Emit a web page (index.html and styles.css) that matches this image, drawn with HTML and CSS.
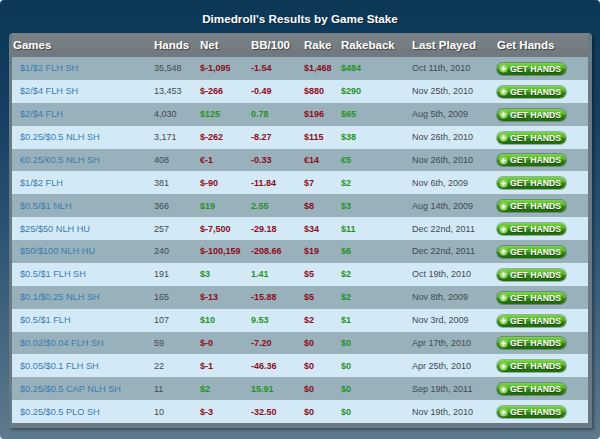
FILE: index.html
```html
<!DOCTYPE html>
<html>
<head>
<meta charset="utf-8">
<link rel="stylesheet" href="styles.css">
</head>
<body>
<div class="panel">
  <h1 class="title">Dimedroll's Results by Game Stake</h1>
  <div class="box">
    <table class="stats">
      <colgroup>
        <col class="c-game"><col class="c-hands"><col class="c-net"><col class="c-bb"><col class="c-rake"><col class="c-rb"><col class="c-last"><col class="c-get">
      </colgroup>
      <thead>
        <tr><th class="game">Games</th><th>Hands</th><th>Net</th><th>BB/100</th><th>Rake</th><th>Rakeback</th><th>Last Played</th><th>Get Hands</th></tr>
      </thead>
      <tbody>
        <tr><td class="game"><a>$1/$2 FLH SH</a></td><td class="num">35,548</td><td class="neg">$-1,095</td><td class="neg">-1.54</td><td class="neg">$1,468</td><td class="pos">$484</td><td class="date">Oct 11th, 2010</td><td><a class="get"><svg viewBox="0 0 10 10"><circle cx="5" cy="5" r="4.5" fill="#8fd25e"/><path d="M5 2.6v4.8M2.6 5h4.8" stroke="#fff" stroke-width="1.6"/></svg>GET HANDS</a></td></tr>
        <tr><td class="game"><a>$2/$4 FLH SH</a></td><td class="num">13,453</td><td class="neg">$-266</td><td class="neg">-0.49</td><td class="neg">$880</td><td class="pos">$290</td><td class="date">Nov 25th, 2010</td><td><a class="get"><svg viewBox="0 0 10 10"><circle cx="5" cy="5" r="4.5" fill="#8fd25e"/><path d="M5 2.6v4.8M2.6 5h4.8" stroke="#fff" stroke-width="1.6"/></svg>GET HANDS</a></td></tr>
        <tr><td class="game"><a>$2/$4 FLH</a></td><td class="num">4,030</td><td class="pos">$125</td><td class="pos">0.78</td><td class="neg">$196</td><td class="pos">$65</td><td class="date">Aug 5th, 2009</td><td><a class="get"><svg viewBox="0 0 10 10"><circle cx="5" cy="5" r="4.5" fill="#8fd25e"/><path d="M5 2.6v4.8M2.6 5h4.8" stroke="#fff" stroke-width="1.6"/></svg>GET HANDS</a></td></tr>
        <tr><td class="game"><a>$0.25/$0.5 NLH SH</a></td><td class="num">3,171</td><td class="neg">$-262</td><td class="neg">-8.27</td><td class="neg">$115</td><td class="pos">$38</td><td class="date">Nov 26th, 2010</td><td><a class="get"><svg viewBox="0 0 10 10"><circle cx="5" cy="5" r="4.5" fill="#8fd25e"/><path d="M5 2.6v4.8M2.6 5h4.8" stroke="#fff" stroke-width="1.6"/></svg>GET HANDS</a></td></tr>
        <tr><td class="game"><a>€0.25/€0.5 NLH SH</a></td><td class="num">408</td><td class="neg">€-1</td><td class="neg">-0.33</td><td class="neg">€14</td><td class="pos">€5</td><td class="date">Nov 26th, 2010</td><td><a class="get"><svg viewBox="0 0 10 10"><circle cx="5" cy="5" r="4.5" fill="#8fd25e"/><path d="M5 2.6v4.8M2.6 5h4.8" stroke="#fff" stroke-width="1.6"/></svg>GET HANDS</a></td></tr>
        <tr><td class="game"><a>$1/$2 FLH</a></td><td class="num">381</td><td class="neg">$-90</td><td class="neg">-11.84</td><td class="neg">$7</td><td class="pos">$2</td><td class="date">Nov 6th, 2009</td><td><a class="get"><svg viewBox="0 0 10 10"><circle cx="5" cy="5" r="4.5" fill="#8fd25e"/><path d="M5 2.6v4.8M2.6 5h4.8" stroke="#fff" stroke-width="1.6"/></svg>GET HANDS</a></td></tr>
        <tr><td class="game"><a>$0.5/$1 NLH</a></td><td class="num">366</td><td class="pos">$19</td><td class="pos">2.55</td><td class="neg">$8</td><td class="pos">$3</td><td class="date">Aug 14th, 2009</td><td><a class="get"><svg viewBox="0 0 10 10"><circle cx="5" cy="5" r="4.5" fill="#8fd25e"/><path d="M5 2.6v4.8M2.6 5h4.8" stroke="#fff" stroke-width="1.6"/></svg>GET HANDS</a></td></tr>
        <tr><td class="game"><a>$25/$50 NLH HU</a></td><td class="num">257</td><td class="neg">$-7,500</td><td class="neg">-29.18</td><td class="neg">$34</td><td class="pos">$11</td><td class="date">Dec 22nd, 2011</td><td><a class="get"><svg viewBox="0 0 10 10"><circle cx="5" cy="5" r="4.5" fill="#8fd25e"/><path d="M5 2.6v4.8M2.6 5h4.8" stroke="#fff" stroke-width="1.6"/></svg>GET HANDS</a></td></tr>
        <tr><td class="game"><a>$50/$100 NLH HU</a></td><td class="num">240</td><td class="neg">$-100,159</td><td class="neg">-208.66</td><td class="neg">$19</td><td class="pos">$6</td><td class="date">Dec 22nd, 2011</td><td><a class="get"><svg viewBox="0 0 10 10"><circle cx="5" cy="5" r="4.5" fill="#8fd25e"/><path d="M5 2.6v4.8M2.6 5h4.8" stroke="#fff" stroke-width="1.6"/></svg>GET HANDS</a></td></tr>
        <tr><td class="game"><a>$0.5/$1 FLH SH</a></td><td class="num">191</td><td class="pos">$3</td><td class="pos">1.41</td><td class="neg">$5</td><td class="pos">$2</td><td class="date">Oct 19th, 2010</td><td><a class="get"><svg viewBox="0 0 10 10"><circle cx="5" cy="5" r="4.5" fill="#8fd25e"/><path d="M5 2.6v4.8M2.6 5h4.8" stroke="#fff" stroke-width="1.6"/></svg>GET HANDS</a></td></tr>
        <tr><td class="game"><a>$0.1/$0.25 NLH SH</a></td><td class="num">165</td><td class="neg">$-13</td><td class="neg">-15.88</td><td class="neg">$5</td><td class="pos">$2</td><td class="date">Nov 8th, 2009</td><td><a class="get"><svg viewBox="0 0 10 10"><circle cx="5" cy="5" r="4.5" fill="#8fd25e"/><path d="M5 2.6v4.8M2.6 5h4.8" stroke="#fff" stroke-width="1.6"/></svg>GET HANDS</a></td></tr>
        <tr><td class="game"><a>$0.5/$1 FLH</a></td><td class="num">107</td><td class="pos">$10</td><td class="pos">9.53</td><td class="neg">$2</td><td class="pos">$1</td><td class="date">Nov 3rd, 2009</td><td><a class="get"><svg viewBox="0 0 10 10"><circle cx="5" cy="5" r="4.5" fill="#8fd25e"/><path d="M5 2.6v4.8M2.6 5h4.8" stroke="#fff" stroke-width="1.6"/></svg>GET HANDS</a></td></tr>
        <tr><td class="game"><a>$0.02/$0.04 FLH SH</a></td><td class="num">59</td><td class="neg">$-0</td><td class="neg">-7.20</td><td class="neg">$0</td><td class="pos">$0</td><td class="date">Apr 17th, 2010</td><td><a class="get"><svg viewBox="0 0 10 10"><circle cx="5" cy="5" r="4.5" fill="#8fd25e"/><path d="M5 2.6v4.8M2.6 5h4.8" stroke="#fff" stroke-width="1.6"/></svg>GET HANDS</a></td></tr>
        <tr><td class="game"><a>$0.05/$0.1 FLH SH</a></td><td class="num">22</td><td class="neg">$-1</td><td class="neg">-46.36</td><td class="neg">$0</td><td class="pos">$0</td><td class="date">Apr 25th, 2010</td><td><a class="get"><svg viewBox="0 0 10 10"><circle cx="5" cy="5" r="4.5" fill="#8fd25e"/><path d="M5 2.6v4.8M2.6 5h4.8" stroke="#fff" stroke-width="1.6"/></svg>GET HANDS</a></td></tr>
        <tr><td class="game"><a>$0.25/$0.5 CAP NLH SH</a></td><td class="num">11</td><td class="pos">$2</td><td class="pos">15.91</td><td class="neg">$0</td><td class="pos">$0</td><td class="date">Sep 19th, 2011</td><td><a class="get"><svg viewBox="0 0 10 10"><circle cx="5" cy="5" r="4.5" fill="#8fd25e"/><path d="M5 2.6v4.8M2.6 5h4.8" stroke="#fff" stroke-width="1.6"/></svg>GET HANDS</a></td></tr>
        <tr><td class="game"><a>$0.25/$0.5 PLO SH</a></td><td class="num">10</td><td class="neg">$-3</td><td class="neg">-32.50</td><td class="neg">$0</td><td class="pos">$0</td><td class="date">Nov 19th, 2010</td><td><a class="get"><svg viewBox="0 0 10 10"><circle cx="5" cy="5" r="4.5" fill="#8fd25e"/><path d="M5 2.6v4.8M2.6 5h4.8" stroke="#fff" stroke-width="1.6"/></svg>GET HANDS</a></td></tr>
      </tbody>
    </table>
  </div>
</div>
</body>
</html>
```

FILE: styles.css
```css
html, body {
  margin: 0;
  padding: 0;
  background: #ffffff;
}

.panel {
  width: 600px;
  height: 439px;
  box-sizing: border-box;
  border-radius: 4px;
  background: linear-gradient(to bottom, #0c3858 0%, #143f61 25%, #2d5574 55%, #5e7a8d 100%);
  font-family: "Liberation Sans", Arial, sans-serif;
  overflow: hidden;
}

.title {
  margin: 0;
  height: 33px;
  box-sizing: border-box;
  padding-top: 3px;
  display: flex;
  align-items: center;
  justify-content: center;
  font-size: 11.7px;
  font-weight: bold;
  color: #ffffff;
  text-shadow: 1px 1px 1px rgba(0, 0, 0, 0.35);
}

.box {
  margin: 0 8px 0 9px;
  padding: 0 4px 5px 3px;
  background: #6a7a84;
  border-radius: 4px 4px 0 0;
  box-shadow: 2px 2px 3px rgba(0, 0, 0, 0.35);
}

.stats {
  width: 576px;
  table-layout: fixed;
  border-collapse: collapse;
  border-spacing: 0;
}

.c-game { width: 140px; }
.c-hands { width: 46px; }
.c-net { width: 51px; }
.c-bb { width: 53px; }
.c-rake { width: 37px; }
.c-rb { width: 71px; }
.c-last { width: 85px; }
.c-get { width: 93px; }

.stats thead tr {
  background: linear-gradient(to bottom, #7a8287 0%, #6f787d 100%);
}

.stats th {
  height: 24px;
  padding: 0 0 0 2px;
  text-align: left;
  font-size: 11.5px;
  font-weight: bold;
  color: #ffffff;
  text-shadow: 1px 1px 1px rgba(0, 0, 0, 0.45);
  white-space: nowrap;
}

.stats th.game {
  padding-left: 1px;
}

.stats td {
  height: 22.875px;
  padding: 0 0 0 2px;
  font-size: 9px;
  white-space: nowrap;
  vertical-align: middle;
}

.stats tbody tr:nth-child(odd) {
  background: #98b1bb;
}

.stats tbody tr:nth-child(even) {
  background: #d3e9f6;
}

.stats td.game {
  padding-left: 8px;
}

.stats td.game a {
  color: #3a7db0;
  font-size: 9.2px;
}

.num,
.date {
  color: #424a50;
}

.neg {
  color: #8c0d1c;
  font-weight: bold;
}

.pos {
  color: #1f941f;
  font-weight: bold;
}

.get {
  display: inline-flex;
  align-items: center;
  width: 69px;
  height: 12px;
  box-sizing: border-box;
  padding-left: 2px;
  border-radius: 6px;
  background: linear-gradient(to bottom, #7bd846 0%, #4fae24 45%, #2f8512 55%, #1f6a0b 100%);
  box-shadow: 0 0 0 1px rgba(20, 70, 10, 0.35);
  color: #ffffff;
  font-size: 8.7px;
  font-weight: bold;
  text-shadow: 0 1px 1px rgba(0, 0, 0, 0.4);
  vertical-align: middle;
  margin-top: 1px;
}

.get svg {
  width: 9px;
  height: 9px;
  margin-right: 2px;
  flex: none;
}
```
